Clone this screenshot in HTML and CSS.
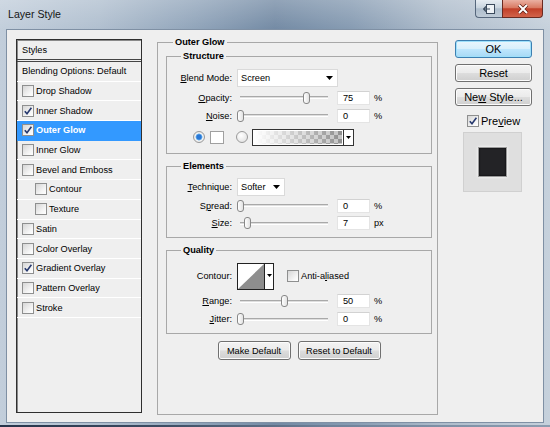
FILE: index.html
```html
<!DOCTYPE html>
<html>
<head>
<meta charset="utf-8">
<title>Layer Style</title>
<link rel="stylesheet" href="styles.css">
</head>
<body>
<div class="window">
  <div class="titlebar">
    <span class="title">Layer Style</span>
    <div class="caption">
      <span class="cap-btn restore">
        <svg width="12" height="10" viewBox="0 0 12 10"><rect x="3.5" y="0.5" width="8" height="9" fill="#eef2f6" stroke="#3b4a5c"/><path d="M0.5 5 H7 M3 2.5 L0.5 5 L3 7.5" fill="none" stroke="#3b4a5c" stroke-width="1.2"/></svg>
      </span>
      <span class="cap-btn close">
        <svg width="12" height="10" viewBox="0 0 12 10"><path d="M2 1 L10 9 M10 1 L2 9" stroke="#5a1a10" stroke-width="3.4"/><path d="M2 1 L10 9 M10 1 L2 9" stroke="#fff" stroke-width="2"/></svg>
      </span>
    </div>
  </div>
  <div class="client">
    <div class="list">
      <div class="li head">Styles</div>
      <div class="li">Blending Options: Default</div>
      <div class="li"><span class="cb"></span>Drop Shadow</div>
      <div class="li"><span class="cb"><svg width="10" height="10" viewBox="0 0 10 10"><path d="M1.8 5.2 L4 7.8 L8.4 1.8" fill="none" stroke="#26386e" stroke-width="1.6"/></svg></span>Inner Shadow</div>
      <div class="li sel-row"><span class="cb"><svg width="10" height="10" viewBox="0 0 10 10"><path d="M1.8 5.2 L4 7.8 L8.4 1.8" fill="none" stroke="#26386e" stroke-width="1.6"/></svg></span>Outer Glow</div>
      <div class="li"><span class="cb"></span>Inner Glow</div>
      <div class="li"><span class="cb"></span>Bevel and Emboss</div>
      <div class="li sub"><span class="cb"></span>Contour</div>
      <div class="li sub"><span class="cb"></span>Texture</div>
      <div class="li"><span class="cb"></span>Satin</div>
      <div class="li"><span class="cb"></span>Color Overlay</div>
      <div class="li"><span class="cb"><svg width="10" height="10" viewBox="0 0 10 10"><path d="M1.8 5.2 L4 7.8 L8.4 1.8" fill="none" stroke="#26386e" stroke-width="1.6"/></svg></span>Gradient Overlay</div>
      <div class="li"><span class="cb"></span>Pattern Overlay</div>
      <div class="li"><span class="cb"></span>Stroke</div>
    </div>

    <fieldset class="main">
      <legend>Outer Glow</legend>

      <fieldset class="group structure">
        <legend>Structure</legend>
        <div class="row r-blend">
          <span class="lbl"><u>B</u>lend Mode:</span>
          <span class="sel sel-blend"><span>Screen</span><svg width="7" height="4" viewBox="0 0 7 4"><path d="M0 0H7L3.5 4Z"/></svg></span>
        </div>
        <div class="row r-19">
          <span class="lbl"><u>O</u>pacity:</span>
          <span class="slider"><span class="thumb" style="left:76%"></span></span>
          <span class="num">75</span><span class="unit">%</span>
        </div>
        <div class="row r-17">
          <span class="lbl"><u>N</u>oise:</span>
          <span class="slider"><span class="thumb" style="left:0%"></span></span>
          <span class="num">0</span><span class="unit">%</span>
        </div>
        <div class="row r-color">
          <span class="rad on"></span>
          <span class="swatch"></span>
          <span class="rad off"></span>
          <span class="grad"><span class="grad-fill"></span><span class="grad-arrow"><svg width="5" height="3" viewBox="0 0 5 3"><path d="M0 0H5L2.5 3Z"/></svg></span></span>
        </div>
      </fieldset>

      <fieldset class="group elements">
        <legend>Elements</legend>
        <div class="row r-tech">
          <span class="lbl"><u>T</u>echnique:</span>
          <span class="sel sel-tech"><span>Softer</span><svg width="7" height="4" viewBox="0 0 7 4"><path d="M0 0H7L3.5 4Z"/></svg></span>
        </div>
        <div class="row r-17">
          <span class="lbl">S<u>p</u>read:</span>
          <span class="slider"><span class="thumb" style="left:0%"></span></span>
          <span class="num">0</span><span class="unit">%</span>
        </div>
        <div class="row r-18">
          <span class="lbl"><u>S</u>ize:</span>
          <span class="slider"><span class="thumb" style="left:8%"></span></span>
          <span class="num">7</span><span class="unit">px</span>
        </div>
      </fieldset>

      <fieldset class="group quality">
        <legend>Quality</legend>
        <div class="row r-contour">
          <span class="lbl">Contour:</span>
          <span class="contour">
            <span class="contour-pic"><svg width="26" height="25" viewBox="0 0 26 25"><path d="M0 25 L26 0 L26 25 Z" fill="#8e8e8e"/></svg></span>
            <span class="contour-arrow"><svg width="5" height="3" viewBox="0 0 5 3"><path d="M0 0H5L2.5 3Z"/></svg></span>
          </span>
          <span class="cb aa"></span><span class="aa-label">Anti-a<u>l</u>iased</span>
        </div>
        <div class="row r-range">
          <span class="lbl"><u>R</u>ange:</span>
          <span class="slider"><span class="thumb" style="left:50%"></span></span>
          <span class="num">50</span><span class="unit">%</span>
        </div>
        <div class="row r-18">
          <span class="lbl"><u>J</u>itter:</span>
          <span class="slider"><span class="thumb" style="left:0%"></span></span>
          <span class="num">0</span><span class="unit">%</span>
        </div>
      </fieldset>

      <div class="defaults">
        <span class="btn b-make">Make Default</span>
        <span class="btn b-reset">Reset to Default</span>
      </div>
    </fieldset>

    <div class="side">
      <span class="sbtn ok"><span>OK</span></span>
      <span class="sbtn"><span>Reset</span></span>
      <span class="sbtn"><span>Ne<u>w</u> Style...</span></span>
      <div class="preview-row">
        <span class="cb"><svg width="10" height="10" viewBox="0 0 10 10"><path d="M1.8 5.2 L4 7.8 L8.4 1.8" fill="none" stroke="#26386e" stroke-width="1.6"/></svg></span>
        <span>Pre<u>v</u>iew</span>
      </div>
      <div class="preview"><span class="preview-sq"></span></div>
    </div>
  </div>
  <div class="bottom-frame"></div>
</div>
</body>
</html>
```

FILE: styles.css
```css
* { box-sizing: border-box; }
html, body { margin: 0; padding: 0; }
body {
  width: 550px;
  height: 427px;
  overflow: hidden;
  font-family: "Liberation Sans", Arial, sans-serif;
  font-size: 9.2px;
  color: #000;
  background: #a9b8c8;
}
u { text-decoration: underline; text-underline-offset: 1px; }

.window {
  width: 550px;
  height: 427px;
  display: flex;
  flex-direction: column;
  background:
    linear-gradient(to bottom, rgba(255,255,255,.22), rgba(255,255,255,0) 30px),
    linear-gradient(to right, #c2cedb 0%, #b0bfcf 18%, #8fa3b9 36%, #738aa4 50%, #869bb2 64%, #aebccb 80%, #c6d1dc 100%);
}

/* title bar */
.titlebar {
  height: 30px;
  flex: none;
  display: flex;
  justify-content: space-between;
  align-items: flex-start;
  padding-left: 8px;
}
.title { font-size: 10.6px; line-height: 28px; color: #151515; }
.caption { display: flex; margin-right: 7px; }
.cap-btn {
  height: 18px;
  display: flex;
  align-items: center;
  justify-content: center;
  border: 1px solid #56677c;
  border-top: 0;
}
.restore {
  width: 27px;
  border-right: 0;
  border-radius: 0 0 0 4px;
  background: linear-gradient(#e6ecf2, #c9d4de 45%, #aebdcc 52%, #bfcbd7);
}
.close {
  width: 41px;
  border-color: #6a2a20;
  border-radius: 0 0 4px 0;
  background: linear-gradient(#eab0a2, #d97a63 45%, #c13f28 52%, #d2634a);
}

/* client area */
.client {
  flex: 1;
  margin: 0 7px 3px;
  background: #efefef;
  display: flex;
  align-items: flex-start;
  box-shadow: 0 0 0 1px #7f90a4;
}
.bottom-frame {
  height: 2px;
  flex: none;
  background: linear-gradient(to right, #27344a 0%, #3d4d63 30%, #6f829a 60%, #8c9db0 100%);
}

/* style list */
.list {
  margin: 9px 0 0 9px;
  width: 126px;
  height: 374px;
  flex: none;
  border: 1px solid #2f2f2f;
  box-shadow: inset 1px 1px 0 #8a8a8a;
  background: #efefef;
}
.li {
  height: 19.7px;
  display: flex;
  align-items: center;
  padding-left: 5px;
  border-bottom: 1px solid #ffffff;
  white-space: nowrap;
}
.li.head { height: 22px; border-bottom: 3px double #454545; }
.li.sub { padding-left: 18px; }
.sel-row { background: #3399ff; color: #fff; font-weight: bold; border-bottom-color: #3399ff; }

.cb {
  width: 12px;
  height: 12px;
  flex: none;
  margin-right: 2px;
  border: 1px solid #8e8f8f;
  background: linear-gradient(135deg, #d6d6d6, #f6f6f6 70%, #ffffff);
  display: inline-flex;
  align-items: center;
  justify-content: center;
}

/* main group */
fieldset {
  margin: 0;
  padding: 0;
  min-width: 0;
  border: 1px solid #a8a8a8;
}
legend {
  padding: 0 2px;
  font-weight: bold;
  line-height: 14px;
}
.main {
  margin: 5px 0 0 15px;
  width: 281px;
  height: 380px;
  flex: none;
  padding: 0 5px 0 8px;
}
.main > legend { margin-left: 7px; }
.group { width: 266px; }
.group > legend { margin-left: 14px; }
.structure { padding-bottom: 6px; }
.elements { margin-top: 5px; padding-bottom: 5px; }
.quality { margin-top: 5px; padding-bottom: 5px; }

.row { display: flex; align-items: center; white-space: nowrap; }
.r-blend { margin-top: 5px; height: 20px; }
.r-19 { height: 19px; }
.r-17 { height: 17px; }
.r-18 { height: 18px; }
.r-color { margin-top: 3px; height: 20px; padding-left: 26px; }
.r-tech { margin-top: 4px; height: 20px; }
.r-contour { margin-top: 5px; height: 28px; }
.r-range { margin-top: 2px; height: 18px; }

.lbl { width: 65px; flex: none; text-align: right; }

.sel {
  height: 18px;
  margin-left: 5px;
  background: #fff;
  border: 1px solid #dadada;
  display: flex;
  align-items: center;
  justify-content: space-between;
  padding: 0 4px 0 3px;
}
.sel-blend { width: 101px; }
.sel-tech { width: 48px; }

.slider {
  position: relative;
  width: 88px;
  height: 3px;
  margin-left: 8px;
  flex: none;
  background: linear-gradient(#a9a9a9 0 1px, #dedede 1px 2px, #ffffff 2px);
}
.thumb {
  position: absolute;
  top: 50%;
  width: 7px;
  height: 12px;
  margin: -6px 0 0 -3.5px;
  border: 1px solid #888;
  border-radius: 3px;
  background: linear-gradient(to right, #ffffff, #e2e2e2);
}
.num {
  width: 33px;
  height: 14px;
  margin-left: 9px;
  flex: none;
  background: #fff;
  border: 1px solid #e4e4e4;
  border-top-color: #d2d2d2;
  padding-left: 5px;
  line-height: 12px;
}
.unit { margin-left: 4px; }

.rad {
  width: 12px;
  height: 12px;
  flex: none;
  border-radius: 50%;
  border: 1px solid #9a9a9a;
  background: radial-gradient(circle at 40% 35%, #ffffff, #dcdcdc);
}
.rad.on {
  background: radial-gradient(circle, #2a78d6 0 2.2px, #7cbdf0 3.2px, #f4f4f4 3.8px, #d8d8d8);
}
.rad.off { margin-left: 12px; }
.swatch {
  width: 14px;
  height: 13px;
  margin-left: 5px;
  flex: none;
  background: #fff;
  border: 1px solid #a0a0a0;
}
.grad {
  width: 102px;
  height: 17px;
  margin-left: 4px;
  flex: none;
  border: 1px solid #333;
  display: flex;
  background: #fff;
}
.grad-fill {
  flex: 1;
  border: 1px solid #fff;
  background:
    linear-gradient(to right, #ffffff, rgba(255,255,255,0)),
    conic-gradient(#8e8e8e 25%, #c4c4c4 0 50%, #8e8e8e 0 75%, #c4c4c4 0) 0 0 / 8px 8px;
}
.grad-arrow {
  width: 10px;
  border-left: 1px solid #333;
  display: flex;
  align-items: center;
  justify-content: center;
  background: #fff;
}

.contour {
  width: 37px;
  height: 27px;
  margin-left: 5px;
  flex: none;
  border: 1px solid #222;
  background: #fff;
  display: flex;
}
.contour-pic { flex: 1; display: flex; }
.contour-arrow {
  width: 10px;
  border-left: 1px solid #222;
  display: flex;
  align-items: flex-start;
  justify-content: center;
  padding-top: 10px;
}
.cb.aa { margin-left: 13px; }
.aa-label { margin-left: 0; }

.defaults {
  margin-top: 7px;
  display: flex;
  justify-content: center;
  gap: 7px;
}
.btn {
  height: 19px;
  display: flex;
  align-items: center;
  justify-content: center;
  border: 1px solid #707070;
  border-radius: 3px;
  background: linear-gradient(#f3f3f3 0%, #ebebeb 48%, #dddddd 52%, #cfcfcf 100%);
  box-shadow: inset 0 0 0 1px #fcfcfc;
}
.b-make { width: 73px; }
.b-reset { width: 83px; }

/* right column */
.side {
  margin: 10px 0 0 17px;
  width: 77px;
  flex: none;
  display: flex;
  flex-direction: column;
  font-size: 11px;
}
.sbtn {
  height: 18px;
  margin-bottom: 6px;
  display: flex;
  align-items: center;
  justify-content: center;
  white-space: nowrap;
  border: 1px solid #707070;
  border-radius: 3px;
  background: linear-gradient(#f3f3f3 0%, #ebebeb 48%, #dddddd 52%, #cfcfcf 100%);
  box-shadow: inset 0 0 0 1px #fcfcfc;
}
.sbtn.ok {
  border-color: #3c7fb1;
  background: linear-gradient(#eaf6fd 0%, #d9f0fc 48%, #bee6fd 52%, #a7d9f5 100%);
  box-shadow: inset 0 0 0 1px #9ee0fb;
}
.preview-row {
  margin-top: 1px;
  height: 16px;
  display: flex;
  align-items: center;
  padding-left: 12px;
}
.preview {
  margin: 3px 0 0 8px;
  width: 59px;
  height: 60px;
  background: #dfdfdf;
  border: 1px solid #d0d0d0;
  display: flex;
  align-items: center;
  justify-content: center;
}
.preview-sq {
  width: 29px;
  height: 30px;
  background: #232326;
  border: 1px solid #9a9a9a;
  box-shadow: 0 0 3px #ffffff, inset 0 0 2px #000;
}
```
